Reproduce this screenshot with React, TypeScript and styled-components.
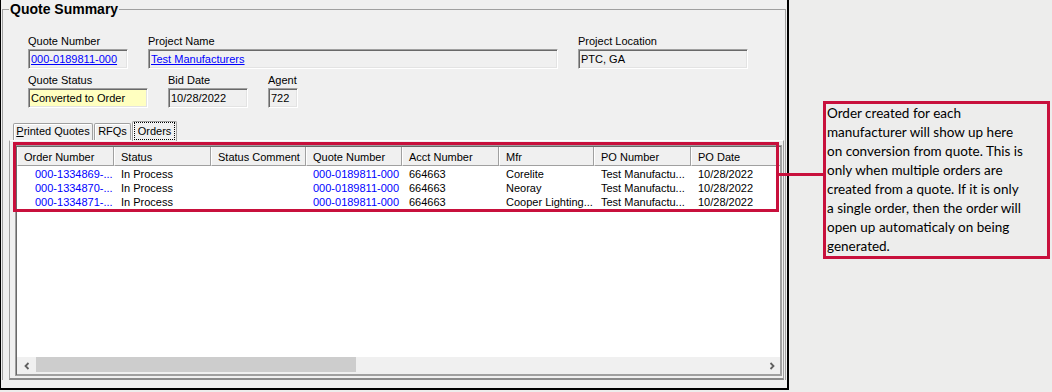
import styled, { createGlobalStyle } from 'styled-components';

const CRIMSON = '#c8103c';

const GlobalStyle = createGlobalStyle`
    html, body {
        margin: 0;
        padding: 0;
    }
    body {
        background: #ededec;
        font-family: 'Liberation Sans', Arial, sans-serif;
        font-size: 11px;
        color: #000;
    }
`;

const columns = [
    { key: 'order', title: 'Order Number', width: 97, indent: 18, link: true },
    { key: 'status', title: 'Status', width: 97 },
    { key: 'comment', title: 'Status Comment', width: 95 },
    { key: 'quote', title: 'Quote Number', width: 96, link: true },
    { key: 'acct', title: 'Acct Number', width: 97 },
    { key: 'mfr', title: 'Mfr', width: 95 },
    { key: 'po', title: 'PO Number', width: 97 },
    { key: 'date', title: 'PO Date', width: 97 },
];

const gridCols = columns.map((c) => `${c.width}px`).join(' ');

const orders: Record<string, string>[] = [
    {
        order: '000-1334869-...',
        status: 'In Process',
        comment: '',
        quote: '000-0189811-000',
        acct: '664663',
        mfr: 'Corelite',
        po: 'Test Manufactu...',
        date: '10/28/2022',
    },
    {
        order: '000-1334870-...',
        status: 'In Process',
        comment: '',
        quote: '000-0189811-000',
        acct: '664663',
        mfr: 'Neoray',
        po: 'Test Manufactu...',
        date: '10/28/2022',
    },
    {
        order: '000-1334871-...',
        status: 'In Process',
        comment: '',
        quote: '000-0189811-000',
        acct: '664663',
        mfr: 'Cooper Lighting...',
        po: 'Test Manufactu...',
        date: '10/28/2022',
    },
];

const noteLines = [
    'Order created for each',
    'manufacturer will show up here',
    'on conversion from quote. This is',
    'only when multiple orders are',
    'created from a quote. If it is only',
    'a single order, then the order will',
    'open up automaticaly on being',
    'generated.',
];

const Chevron = ({ dir }: { dir: 'left' | 'right' }) => (
    <svg width='8' height='8' viewBox='0 0 8 8'>
        <polyline
            points={dir === 'left' ? '5.5,1 2.5,4 5.5,7' : '2.5,1 5.5,4 2.5,7'}
            fill='none'
            stroke='#606060'
            strokeWidth='1.8'
        />
    </svg>
);

const App = () => {
    return (
        <>
            <GlobalStyle />
            <Page>
                <Window>
                    <GroupBox>
                        <Legend>Quote Summary</Legend>
                        <FieldRow>
                            <Field>
                                <Label>Quote Number</Label>
                                <ValueBox $w={100}>
                                    <LinkText>000-0189811-000</LinkText>
                                </ValueBox>
                            </Field>
                            <Field>
                                <Label>Project Name</Label>
                                <ValueBox $w={410}>
                                    <LinkText>Test Manufacturers</LinkText>
                                </ValueBox>
                            </Field>
                            <Field>
                                <Label>Project Location</Label>
                                <ValueBox $w={170}>PTC, GA</ValueBox>
                            </Field>
                        </FieldRow>
                        <FieldRow $top={5}>
                            <Field>
                                <Label>Quote Status</Label>
                                <ValueBox $w={120} $bg='#ffffc0'>
                                    Converted to Order
                                </ValueBox>
                            </Field>
                            <Field>
                                <Label>Bid Date</Label>
                                <ValueBox $w={80}>10/28/2022</ValueBox>
                            </Field>
                            <Field>
                                <Label>Agent</Label>
                                <ValueBox $w={30}>722</ValueBox>
                            </Field>
                        </FieldRow>

                        <TabStrip>
                            <Tab $w={80}>
                                <u>P</u>rinted Quotes
                            </Tab>
                            <Tab $w={37}>RFQs</Tab>
                            <Tab $w={45} $active>
                                <FocusRing>Orders</FocusRing>
                            </Tab>
                        </TabStrip>
                        <TabPanel>
                            <ListView>
                                <HeaderRow>
                                    {columns.map((c) => (
                                        <HeadCell key={c.key}>{c.title}</HeadCell>
                                    ))}
                                </HeaderRow>
                                <ListBody>
                                    {orders.map((o) => (
                                        <Row key={o.order}>
                                            {columns.map((c) => (
                                                <Cell
                                                    key={c.key}
                                                    $indent={c.indent ?? 7}
                                                    $link={c.link}
                                                >
                                                    {o[c.key]}
                                                </Cell>
                                            ))}
                                        </Row>
                                    ))}
                                </ListBody>
                                <HScroll>
                                    <ScrollBtn $shift={3}>
                                        <Chevron dir='left' />
                                    </ScrollBtn>
                                    <Thumb />
                                    <Track />
                                    <ScrollBtn>
                                        <Chevron dir='right' />
                                    </ScrollBtn>
                                </HScroll>
                            </ListView>
                            <Highlight />
                        </TabPanel>
                    </GroupBox>
                </Window>

                <Callout>
                    {noteLines.map((line) => (
                        <NoteLine key={line}>{line}</NoteLine>
                    ))}
                </Callout>
            </Page>
        </>
    );
};

const Page = styled.div`
    display: flex;
    align-items: flex-start;
    width: 1052px;
    height: 392px;
    overflow: hidden;
`;

const Window = styled.div`
    box-sizing: border-box;
    flex: none;
    width: 789px;
    height: 390px;
    background: #f0f0f0;
    border-left: 1px solid #000;
    border-right: 2px solid #000;
    border-bottom: 2px solid #000;
    overflow: hidden;
`;

const GroupBox = styled.fieldset`
    margin: 0 1px;
    padding: 16px 1px 0 6px;
    min-width: 0;
    border: 1px solid #a0a0a0;
    border-bottom: none;
`;

const Legend = styled.legend`
    padding: 0 1px;
    font-size: 14px;
    font-weight: bold;
    line-height: 19px;
`;

const FieldRow = styled.div<{ $top?: number }>`
    display: flex;
    gap: 20px;
    margin: ${(p) => p.$top ?? 0}px 0 0 19px;
`;

const Field = styled.div`
    display: flex;
    flex-direction: column;
`;

const Label = styled.span`
    height: 13px;
    line-height: 13px;
    margin-bottom: 1px;
    white-space: nowrap;
`;

const ValueBox = styled.div<{ $w: number; $bg?: string }>`
    box-sizing: border-box;
    width: ${(p) => p.$w}px;
    height: 20px;
    padding: 1px 0 0 2px;
    line-height: 16px;
    white-space: nowrap;
    overflow: hidden;
    background: ${(p) => p.$bg ?? '#f0f0f0'};
    border: 1px solid;
    border-color: #a0a0a0 #fff #fff #a0a0a0;
    box-shadow: inset 1px 1px 0 #696969, inset -1px -1px 0 #e3e3e3;
`;

const LinkText = styled.span`
    color: #0000ff;
    text-decoration: underline;
`;

const TabStrip = styled.div`
    display: flex;
    align-items: flex-end;
    gap: 1px;
    height: 19px;
    margin-top: 13px;
    padding-left: 4px;
`;

const Tab = styled.div<{ $w: number; $active?: boolean }>`
    position: relative;
    z-index: ${(p) => (p.$active ? 1 : 0)};
    box-sizing: border-box;
    width: ${(p) => p.$w}px;
    height: ${(p) => (p.$active ? 20 : 17)}px;
    margin-bottom: ${(p) => (p.$active ? -1 : 0)}px;
    background: #f0f0f0;
    border: 1px solid #a0a0a0;
    border-bottom: none;
    border-radius: 2px 2px 0 0;
    box-shadow: inset 1px 1px 0 #fff;
    line-height: 14px;
    text-align: center;
    white-space: nowrap;
`;

const FocusRing = styled.span`
    display: inline-block;
    padding: 1px 3px;
    border: 1px dotted #000;
    line-height: 14px;
`;

const TabPanel = styled.div`
    position: relative;
    box-sizing: border-box;
    height: 240px;
    padding: 4px 1px 2px 5px;
    background: #f0f0f0;
    border: 1px solid #a0a0a0;
    border-top-color: #fff;
    border-bottom: 2px solid #8a8a8a;
`;

const ListView = styled.div`
    box-sizing: border-box;
    display: flex;
    flex-direction: column;
    height: 231px;
    padding: 1px;
    background: #fff;
    border: 1px solid #a0a0a0;
    box-shadow: inset 1px 1px 0 #696969, inset -1px -1px 0 #a0a0a0;
    overflow: hidden;
`;

const HeaderRow = styled.div`
    flex: none;
    display: grid;
    grid-template-columns: ${gridCols};
    height: 19px;
    background: #f0f0f0;
    overflow: hidden;
`;

const HeadCell = styled.div`
    box-sizing: border-box;
    height: 19px;
    padding: 3px 0 0 6px;
    line-height: 15px;
    background: #f0f0f0;
    border-left: 1px solid #fff;
    border-right: 1px solid #a0a0a0;
    border-bottom: 1px solid #a0a0a0;
    white-space: nowrap;
    overflow: hidden;
`;

const ListBody = styled.div`
    flex: 1;
    padding-top: 1px;
    background: #fff;
    overflow: hidden;
`;

const Row = styled.div`
    display: grid;
    grid-template-columns: ${gridCols};
    height: 14px;
    line-height: 14px;
`;

const Cell = styled.div<{ $indent: number; $link?: boolean }>`
    padding-left: ${(p) => p.$indent}px;
    color: ${(p) => (p.$link ? '#0000ff' : '#000')};
    white-space: nowrap;
    overflow: hidden;
`;

const HScroll = styled.div`
    flex: none;
    display: flex;
    height: 17px;
    background: #f0f0f0;
`;

const ScrollBtn = styled.div<{ $shift?: number }>`
    flex: none;
    width: 17px;
    display: flex;
    align-items: center;
    justify-content: center;
    padding-left: ${(p) => p.$shift ?? 0}px;
    box-sizing: border-box;
`;

const Thumb = styled.div`
    flex: none;
    width: 320px;
    height: 15px;
    margin-left: 2px;
    background: #cdcdcd;
`;

const Track = styled.div`
    flex: 1;
`;

const Highlight = styled.div`
    position: absolute;
    left: 3px;
    top: 1px;
    box-sizing: border-box;
    width: 766px;
    height: 70px;
    border: 3px solid ${CRIMSON};
    pointer-events: none;
`;

const Callout = styled.div`
    position: relative;
    flex: none;
    box-sizing: border-box;
    width: 227px;
    height: 158px;
    margin: 101px 0 0 34px;
    padding-left: 1px;
    border: 3px solid ${CRIMSON};
    font-family: Lato, 'Open Sans', sans-serif;
    font-size: 13.5px;
    line-height: 19px;
    color: #000;
    &::before {
        content: '';
        position: absolute;
        left: -48px;
        top: 69px;
        width: 45px;
        height: 3px;
        background: ${CRIMSON};
    }
`;

const NoteLine = styled.span`
    display: block;
    white-space: nowrap;
`;

export default App;
